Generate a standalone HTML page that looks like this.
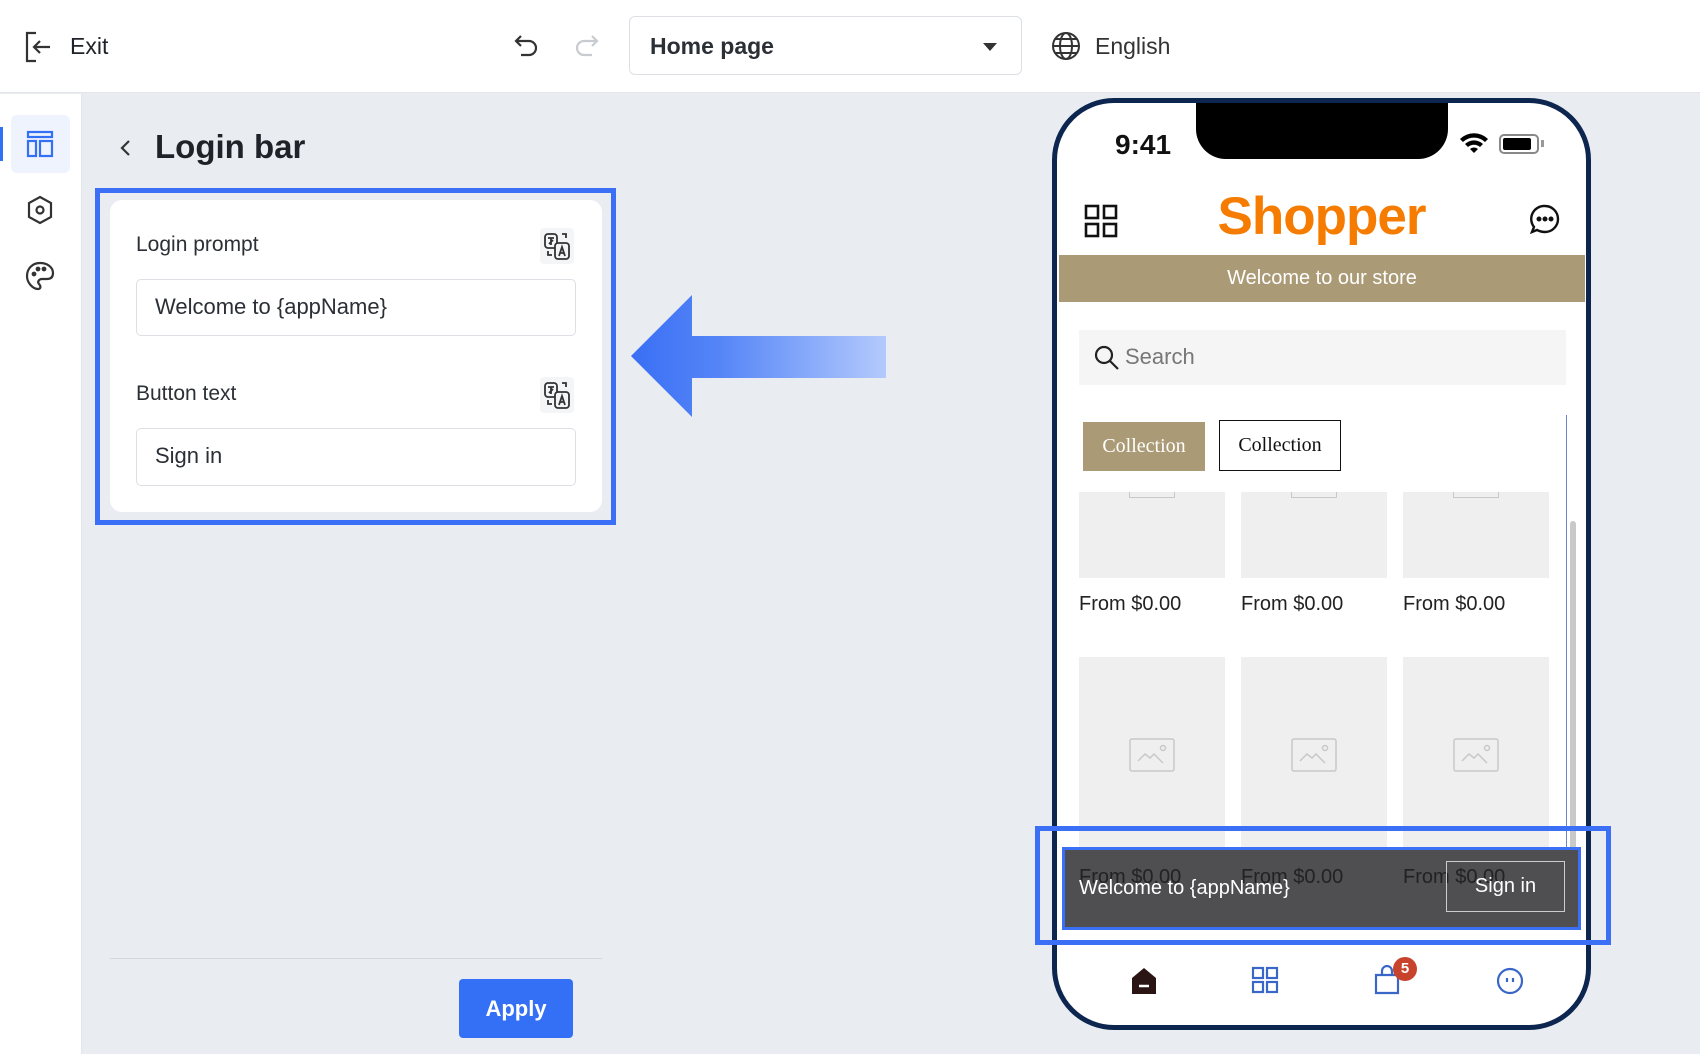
<!DOCTYPE html>
<html><head><meta charset="utf-8"><style>
*{box-sizing:border-box;margin:0;padding:0}
body{width:1700px;height:1054px;position:relative;overflow:hidden;background:#e9ecf1;font-family:"Liberation Sans",Arial,sans-serif;color:#1f2329}
.a{position:absolute}
</style></head><body>
<!-- top bar -->
<div class="a" style="left:0;top:0;width:1700px;height:93px;background:#fff;border-bottom:1px solid #e3e5e8"></div>
<svg class="a" style="left:24px;top:31px" width="30" height="32" viewBox="0 0 30 32" fill="none" stroke="#333" stroke-width="2.2"><path d="M12 2H3v28h9"/><path d="M26 16H10M16 10l-6 6 6 6"/></svg>
<div class="a" style="left:70px;top:33px;font-size:23px">Exit</div>
<svg class="a" style="left:513px;top:33px" width="28" height="26" viewBox="0 0 28 26" fill="none" stroke="#333" stroke-width="2.2"><path d="M8 3L3 8l5 5"/><path d="M3 8h13a7 7 0 010 14H8"/></svg>
<svg class="a" style="left:572px;top:33px" width="28" height="26" viewBox="0 0 28 26" fill="none" stroke="#c8cbd0" stroke-width="2.2"><path d="M20 3l5 5-5 5"/><path d="M25 8H12a7 7 0 000 14h8"/></svg>
<div class="a" style="left:629px;top:16px;width:393px;height:59px;border:1.5px solid #dcdfe4;border-radius:6px;background:#fff"></div>
<div class="a" style="left:650px;top:33px;font-size:23px;font-weight:bold;color:#2b2f36">Home page</div>
<div class="a" style="left:983px;top:43px;width:0;height:0;border-left:7px solid transparent;border-right:7px solid transparent;border-top:8px solid #333"></div>
<svg class="a" style="left:1051px;top:31px" width="30" height="30" viewBox="0 0 30 30" fill="none" stroke="#333" stroke-width="2"><circle cx="15" cy="15" r="13"/><ellipse cx="15" cy="15" rx="6" ry="13"/><path d="M2 15h26M4 8h22M4 22h22"/></svg>
<div class="a" style="left:1095px;top:33px;font-size:23px;color:#333">English</div>
<!-- rail -->
<div class="a" style="left:0;top:94px;width:82px;height:960px;background:#fff;border-right:1px solid #e3e5e8"></div>
<div class="a" style="left:11px;top:115px;width:59px;height:58px;background:#eef3fe;border-radius:6px"></div>
<div class="a" style="left:0;top:127px;width:3px;height:34px;background:#3370f5"></div>
<svg class="a" style="left:26px;top:130px" width="28" height="28" viewBox="0 0 28 28" fill="none" stroke="#3370f5" stroke-width="2.2"><rect x="2" y="2" width="24" height="5"/><rect x="2" y="11" width="8" height="15"/><rect x="14" y="11" width="12" height="15"/></svg>
<svg class="a" style="left:26px;top:195px" width="28" height="30" viewBox="0 0 28 30" fill="none" stroke="#333" stroke-width="2.2"><path d="M14 2l11 6v14l-11 6-11-6V8z"/><circle cx="14" cy="15" r="3.5"/></svg>
<svg class="a" style="left:25px;top:261px" width="30" height="30" viewBox="0 0 30 30" fill="none" stroke="#333" stroke-width="2.2"><path d="M15 2C7 2 2 8 2 15s6 13 11 13c3 0 3-3 1-5s0-5 3-5h5c4 0 6-2 6-6C28 6 22 2 15 2z"/><circle cx="9" cy="13" r="1.3" fill="#333"/><circle cx="13" cy="8" r="1.3" fill="#333"/><circle cx="19" cy="8" r="1.3" fill="#333"/></svg>
<!-- panel -->
<svg class="a" style="left:119px;top:138px" width="14" height="20" viewBox="0 0 14 20" fill="none" stroke="#333" stroke-width="2.2"><path d="M10 3L3 10l7 7"/></svg>
<div class="a" style="left:155px;top:128px;font-size:33px;font-weight:bold;color:#1f2329">Login bar</div>
<div class="a" style="left:95px;top:188px;width:521px;height:337px;border:5px solid #3b6ff5"></div>
<div class="a" style="left:110px;top:200px;width:492px;height:312px;background:#fff;border-radius:12px"></div>
<div class="a" style="left:136px;top:233px;font-size:21px;color:#2b2f36">Login prompt</div>
<div class="a" style="left:136px;top:382px;font-size:21px;color:#2b2f36">Button text</div>
<svg class="a" style="left:540px;top:228px" width="34" height="36" viewBox="0 0 34 36" fill="none" stroke="#333" stroke-width="1.8"><rect x="0" y="0" width="34" height="36" rx="4" fill="#f4f5f7" stroke="none"/><rect x="5" y="6" width="12" height="14" rx="3"/><path d="M8 10h6M11 10v7M9 16l4-4"/><rect x="15" y="15" width="14" height="16" rx="3" fill="#f4f5f7"/><path d="M19 28l3-9 3 9M20 25h4"/><path d="M22 6h4v4M8 23v4h4"/></svg>
<svg class="a" style="left:540px;top:377px" width="34" height="36" viewBox="0 0 34 36" fill="none" stroke="#333" stroke-width="1.8"><rect x="0" y="0" width="34" height="36" rx="4" fill="#f4f5f7" stroke="none"/><rect x="5" y="6" width="12" height="14" rx="3"/><path d="M8 10h6M11 10v7M9 16l4-4"/><rect x="15" y="15" width="14" height="16" rx="3" fill="#f4f5f7"/><path d="M19 28l3-9 3 9M20 25h4"/><path d="M22 6h4v4M8 23v4h4"/></svg>
<div class="a" style="left:136px;top:279px;width:440px;height:57px;border:1.5px solid #dcdfe4;border-radius:5px;padding:14px 18px;font-size:22px;color:#2b2f36">Welcome to {appName}</div>
<div class="a" style="left:136px;top:428px;width:440px;height:58px;border:1.5px solid #dcdfe4;border-radius:5px;padding:14px 18px;font-size:22px;color:#2b2f36">Sign in</div>
<svg class="a" style="left:628px;top:292px" width="262" height="128"><defs><linearGradient id="g" x1="0" x2="1"><stop offset="0" stop-color="#3a6ff5"/><stop offset="0.35" stop-color="#5585f7"/><stop offset="1" stop-color="#b4cafc"/></linearGradient></defs><path d="M3 64L64 3v41h194v42H64v39z" fill="url(#g)"/></svg>
<div class="a" style="left:110px;top:958px;width:492px;height:1px;background:#d4d7dc"></div>
<div class="a" style="left:459px;top:979px;width:114px;height:59px;background:#3370f5;border-radius:4px;color:#fff;font-size:22px;font-weight:bold;text-align:center;line-height:59px">Apply</div>
<!-- phone -->
<div class="a" style="left:1052px;top:98px;width:539px;height:932px;border:5px solid #0d2650;border-radius:62px;background:#fff;overflow:hidden">
<div class="a" style="left:139px;top:-5px;width:252px;height:61px;background:#000;border-radius:0 0 30px 30px"></div>
<div class="a" style="left:58px;top:26px;font-size:28px;font-weight:bold;color:#111">9:41</div>
<svg class="a" style="left:402px;top:28px" width="30" height="24" viewBox="0 0 30 24"><path d="M15 22l-4-4a6 6 0 018 0z M6 13a13 13 0 0118 0l-3 3a9 9 0 00-12 0z M1 8a20 20 0 0128 0l-3 3a16 16 0 00-22 0z" fill="#000"/></svg>
<div class="a" style="left:442px;top:31px;width:40px;height:20px;border:2px solid #888;border-radius:5px;padding:2px"><div style="width:28px;height:12px;background:#000;border-radius:2px"></div></div>
<div class="a" style="left:484px;top:37px;width:3px;height:7px;background:#999"></div>
<svg class="a" style="left:27px;top:101px" width="34" height="34" viewBox="0 0 34 34" fill="none" stroke="#111" stroke-width="2.6"><rect x="2" y="2" width="12" height="12"/><rect x="20" y="2" width="12" height="12"/><rect x="2" y="20" width="12" height="12"/><rect x="20" y="20" width="12" height="12"/></svg>
<div class="a" style="left:0;top:83px;width:529px;text-align:center;font-size:53px;font-weight:bold;color:#f57c00;letter-spacing:-1px">Shopper</div>
<svg class="a" style="left:472px;top:100px" width="32" height="32" viewBox="0 0 32 32" fill="none" stroke="#111" stroke-width="2.4"><path d="M16 3a13 13 0 110 26c-3 0-6-1-8-2l-5 2 2-5a13 13 0 0111-21z"/><circle cx="10" cy="16" r="1.3" fill="#111"/><circle cx="16" cy="16" r="1.3" fill="#111"/><circle cx="22" cy="16" r="1.3" fill="#111"/></svg>
<div class="a" style="left:2px;top:152px;width:526px;height:47px;background:#ab9a76;color:#fff;font-size:20px;text-align:center;line-height:47px">Welcome to our store</div>
<div class="a" style="left:22px;top:227px;width:487px;height:55px;background:#f5f5f5"></div>
<svg class="a" style="left:37px;top:242px" width="26" height="26" viewBox="0 0 26 26" fill="none" stroke="#222" stroke-width="2.2"><circle cx="10" cy="10" r="8"/><path d="M16 16l8 8"/></svg>
<div class="a" style="left:68px;top:241px;font-size:22px;color:#777">Search</div>
<div class="a" style="left:509px;top:312px;width:1px;height:440px;background:#6b86c9"></div>
<div class="a" style="left:513px;top:418px;width:6px;height:334px;background:#c9c9c9;border-radius:3px"></div>
<div class="a" style="left:26px;top:319px;width:122px;height:49px;background:#ab9a76;color:#fff;font-family:'Liberation Serif',serif;font-size:20px;text-align:center;line-height:49px">Collection</div>
<div class="a" style="left:162px;top:317px;width:122px;height:51px;border:1.5px solid #111;color:#111;font-family:'Liberation Serif',serif;font-size:20px;text-align:center;line-height:48px">Collection</div>
<div class="a" style="left:22px;top:389px;width:146px;height:86px;background:#efefef"></div>
<div class="a" style="left:184px;top:389px;width:146px;height:86px;background:#efefef"></div>
<div class="a" style="left:346px;top:389px;width:146px;height:86px;background:#efefef"></div>
<div class="a" style="left:72px;top:389px;width:46px;height:6px;border:1.5px solid #c8c8c8;border-top:none"></div>
<div class="a" style="left:234px;top:389px;width:46px;height:6px;border:1.5px solid #c8c8c8;border-top:none"></div>
<div class="a" style="left:396px;top:389px;width:46px;height:6px;border:1.5px solid #c8c8c8;border-top:none"></div>
<div class="a" style="left:22px;top:490px;font-size:20px;color:#222">From $0.00</div>
<div class="a" style="left:184px;top:490px;font-size:20px;color:#222">From $0.00</div>
<div class="a" style="left:346px;top:490px;font-size:20px;color:#222">From $0.00</div>
<div class="a" style="left:22px;top:554px;width:146px;height:200px;background:#efefef"></div>
<div class="a" style="left:184px;top:554px;width:146px;height:200px;background:#efefef"></div>
<div class="a" style="left:346px;top:554px;width:146px;height:200px;background:#efefef"></div>
<svg class="a" style="left:72px;top:635px" width="46" height="34" viewBox="0 0 46 34" fill="none" stroke="#c8c8c8" stroke-width="1.5"><rect x="1" y="1" width="44" height="32" rx="2"/><path d="M9 23l7-7 5 4 4-4 9 9"/><circle cx="34" cy="10" r="2.5"/></svg>
<svg class="a" style="left:234px;top:635px" width="46" height="34" viewBox="0 0 46 34" fill="none" stroke="#c8c8c8" stroke-width="1.5"><rect x="1" y="1" width="44" height="32" rx="2"/><path d="M9 23l7-7 5 4 4-4 9 9"/><circle cx="34" cy="10" r="2.5"/></svg>
<svg class="a" style="left:396px;top:635px" width="46" height="34" viewBox="0 0 46 34" fill="none" stroke="#c8c8c8" stroke-width="1.5"><rect x="1" y="1" width="44" height="32" rx="2"/><path d="M9 23l7-7 5 4 4-4 9 9"/><circle cx="34" cy="10" r="2.5"/></svg>
<div class="a" style="left:5px;top:744px;width:519px;height:83px;background:#4f4e50;border:3px solid #3b6ff5"></div>
<div class="a" style="left:22px;top:763px;font-size:20px;color:#222">From $0.00</div>
<div class="a" style="left:184px;top:763px;font-size:20px;color:#222">From $0.00</div>
<div class="a" style="left:346px;top:763px;font-size:20px;color:#222">From $0.00</div>
<div class="a" style="left:22px;top:774px;font-size:20px;color:#fff">Welcome to {appName}</div>
<div class="a" style="left:389px;top:758px;width:119px;height:51px;border:1.5px solid #ccc;color:#fff;font-size:20px;text-align:center;line-height:48px">Sign in</div>
<svg class="a" style="left:73px;top:864px" width="28" height="28" viewBox="0 0 28 28"><path d="M14 1L2 11v16h24V11z" fill="#2a1414"/><path d="M9 19h10" stroke="#fff" stroke-width="2.5"/></svg>
<svg class="a" style="left:194px;top:863px" width="28" height="28" viewBox="0 0 28 28" fill="none" stroke="#3a66c8" stroke-width="2.2"><rect x="2" y="2" width="10" height="10"/><rect x="16" y="2" width="10" height="10"/><rect x="2" y="16" width="10" height="10"/><rect x="16" y="16" width="10" height="10"/></svg>
<svg class="a" style="left:316px;top:862px" width="28" height="30" viewBox="0 0 28 30" fill="none" stroke="#3a66c8" stroke-width="2.2"><path d="M3 10h22v18H3z"/><path d="M9 10V6a5 5 0 0110 0v4"/></svg>
<div class="a" style="left:336px;top:854px;width:24px;height:24px;border-radius:12px;background:#c8432c;color:#fff;font-size:15px;font-weight:bold;text-align:center;line-height:24px">5</div>
<svg class="a" style="left:439px;top:864px" width="28" height="28" viewBox="0 0 28 28" fill="none" stroke="#3a66c8" stroke-width="2.2"><circle cx="14" cy="14" r="12"/><path d="M11 11v4M17 11v4"/></svg>
</div>
<div class="a" style="left:1035px;top:826px;width:576px;height:119px;border:5px solid #3b6ff5"></div>
</body></html>
